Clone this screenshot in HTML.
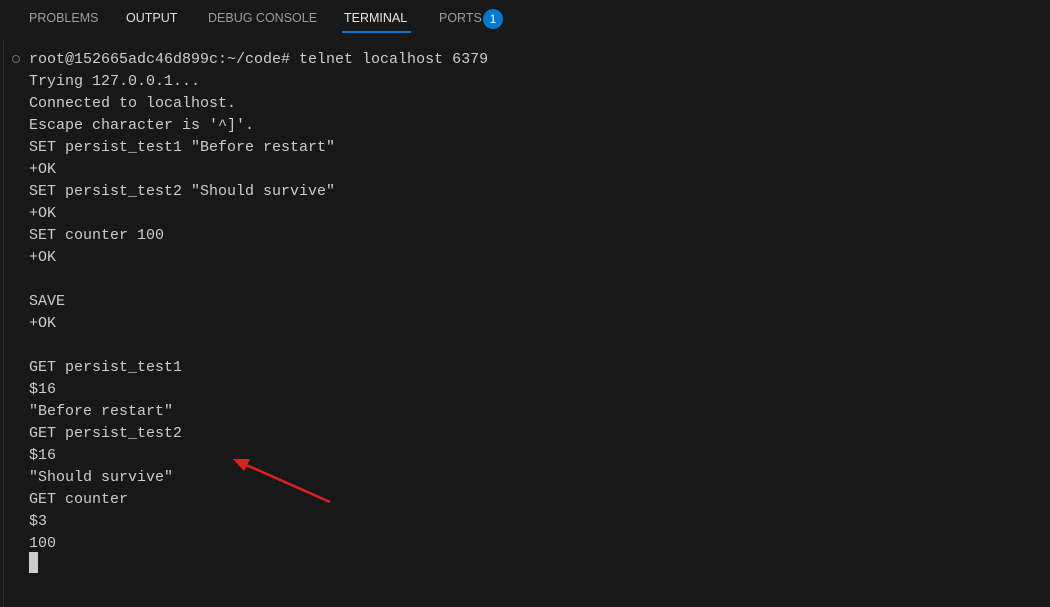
<!DOCTYPE html>
<html><head><style>
body{margin:0;width:1050px;height:607px;background:#181818;overflow:hidden;position:relative;font-family:"Liberation Sans",sans-serif}
.tab{position:absolute;top:11px;font-size:12.5px;color:#9d9d9d;letter-spacing:0}
.term{position:absolute;left:29px;top:49px;font-family:"Liberation Mono",monospace;font-size:15px;line-height:22px;color:#cccccc;white-space:pre;margin:0}
</style></head><body>
<div style="position:absolute;left:3px;top:40px;width:1px;height:567px;background:#2a2a2a"></div>
<div class="tab" style="left:29px">PROBLEMS</div>
<div class="tab" style="left:126px;color:#e0e0e0">OUTPUT</div>
<div class="tab" style="left:208px">DEBUG CONSOLE</div>
<div class="tab" style="left:344px;color:#e7e7e7">TERMINAL</div>
<div style="position:absolute;left:342px;top:31px;width:69px;height:2px;background:#0078d4"></div>
<div class="tab" style="left:439px">PORTS</div>
<div style="position:absolute;left:483px;top:9px;width:20px;height:20px;border-radius:50%;background:#0078d4;color:#fff;font-size:12px;text-align:center;line-height:20px">1</div>
<div style="position:absolute;left:12px;top:55px;width:6px;height:6px;border-radius:50%;border:1.5px solid #6b6b6b"></div>
<pre class="term">root@152665adc46d899c:~/code# telnet localhost 6379
Trying 127.0.0.1...
Connected to localhost.
Escape character is '^]'.
SET persist_test1 "Before restart"
+OK
SET persist_test2 "Should survive"
+OK
SET counter 100
+OK

SAVE
+OK

GET persist_test1
$16
"Before restart"
GET persist_test2
$16
"Should survive"
GET counter
$3
100
</pre>
<div style="position:absolute;left:29px;top:552px;width:9px;height:21px;background:#cccccc"></div>
<svg style="position:absolute;left:0;top:0" width="1050" height="607">
<line x1="330" y1="502" x2="244" y2="464" stroke="#e02020" stroke-width="2.5"/>
<polygon points="233,459 250,459 244,471" fill="#e02020"/>
</svg>
</body></html>
